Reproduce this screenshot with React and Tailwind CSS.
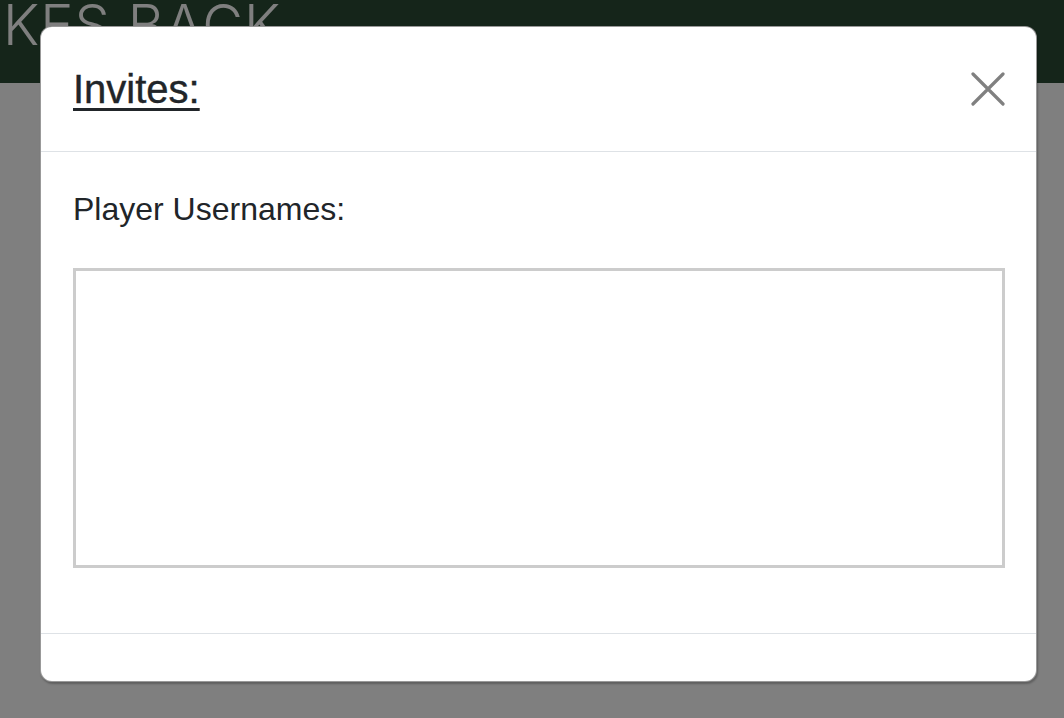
import React from 'react';

const CloseIcon = () => (
  <svg width="34" height="34" viewBox="0 0 34 34" fill="none" stroke="#808080" strokeWidth="3.2" strokeLinecap="round">
    <path d="M2 2 L32 32 M32 2 L2 32" />
  </svg>
);

const App = () => {
  return (
    <div className="relative h-[718px] w-full overflow-hidden bg-white" style={{ fontFamily: '"Liberation Sans", Arial, sans-serif' }}>
      {/* Page behind the dialog */}
      <div className="flex h-[83px] items-start overflow-hidden bg-[#2a4a34]">
        <div className="-mt-[3px] pl-[3px] text-[56px] font-light leading-none tracking-[1px] text-white" style={{ fontFamily: 'Inter, "Liberation Sans", sans-serif' }}>
          KES BACK
        </div>
      </div>

      {/* Backdrop */}
      <div className="absolute inset-0 bg-black/50">
        <div className="ml-[40px] mt-[26px] flex w-[997px] flex-col rounded-[12px] border border-black/40 bg-white shadow-[1px_2px_2px_rgba(0,0,0,0.25)]">
          {/* Header */}
          <div className="flex h-[125px] items-center justify-between border-b border-[#dee2e6] pl-8 pr-[31px]">
            <h2 className="text-[40px] leading-[48px] text-[#212529] underline decoration-[3px] underline-offset-[5px]" style={{ WebkitTextStroke: '0.4px #212529' }}>Invites:</h2>
            <button className="flex items-center justify-center">
              <CloseIcon />
            </button>
          </div>

          {/* Body */}
          <div className="pb-[65px] pl-8 pr-[31px] pt-[38px]">
            <label className="block text-[32px] leading-[38px] text-[#212529]">Player Usernames:</label>
            <textarea className="mt-[40px] block h-[300px] w-full resize-none border-[3px] border-[#cccccc] outline-none" />
          </div>

          {/* Footer */}
          <div className="h-[48px] border-t border-[#dee2e6]" />
        </div>
      </div>
    </div>
  );
};

export default App;
